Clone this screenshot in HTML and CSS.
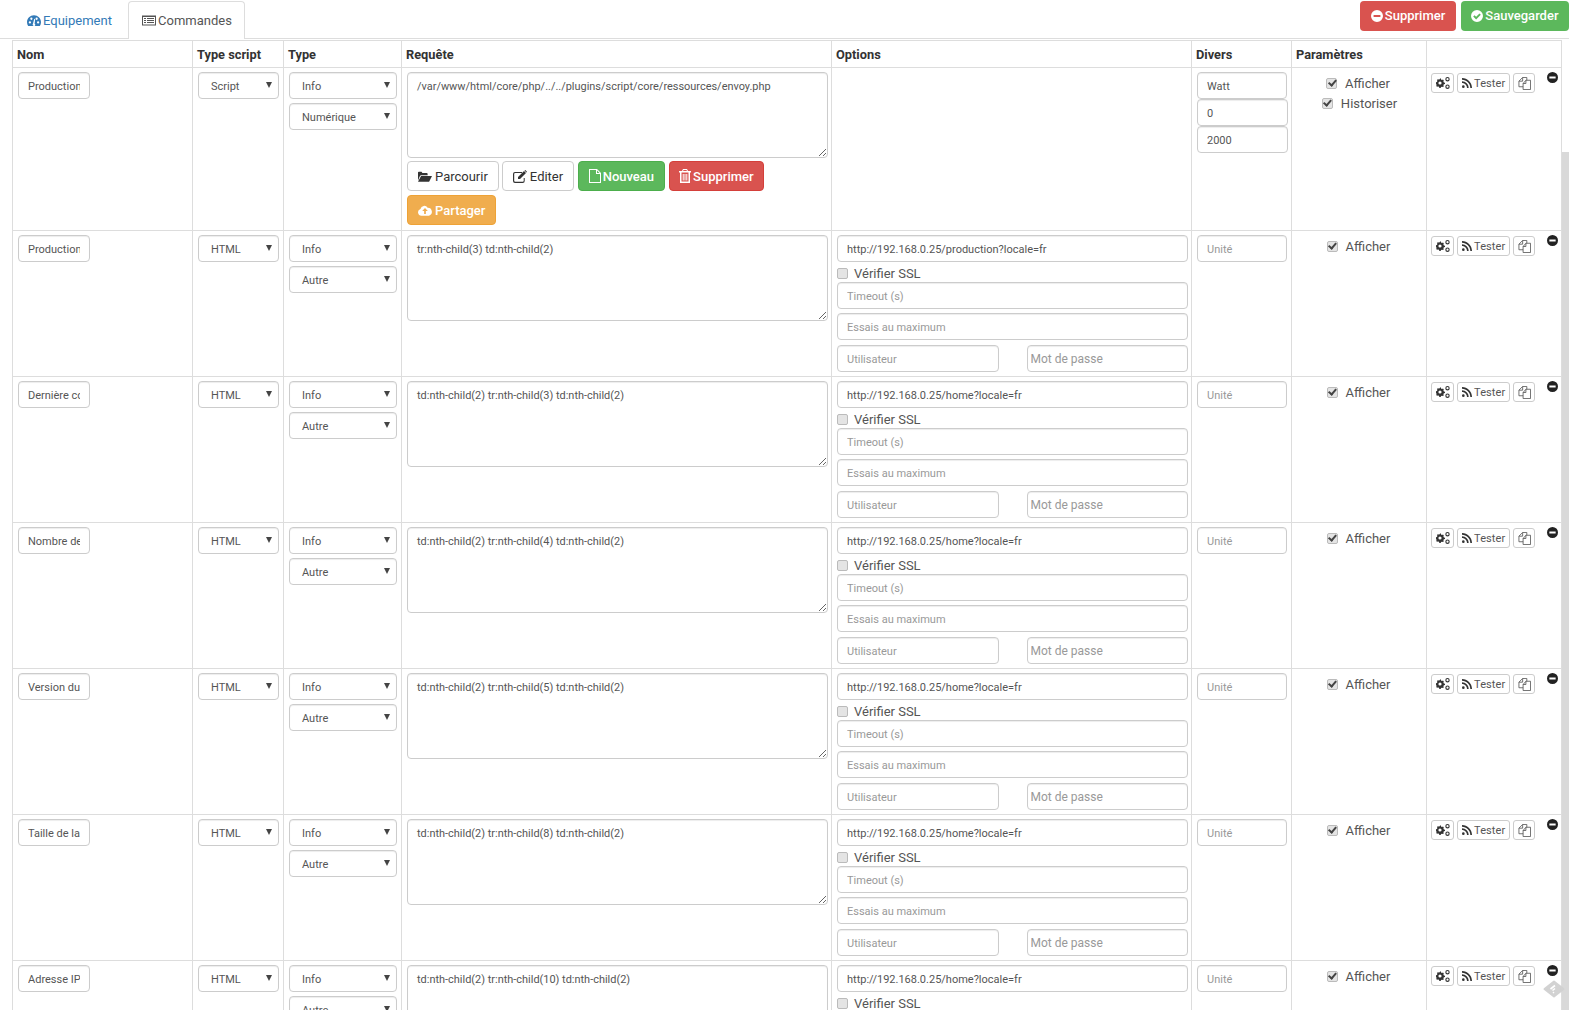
FILE: index.html
```html
<!DOCTYPE html>
<html lang="fr">

<head>
    <meta charset="UTF-8">
    <title>Commandes</title>
    <link rel="stylesheet" href="styles.css">
</head>

<body>

    <svg class="defs" width="0" height="0">
        <symbol id="i-dash" viewBox="0 0 16 14"><path d="M8 1C3.6 1 0 4.6 0 9c0 1.6.5 3 1.3 4.3h13.4C15.5 12 16 10.600 16 9c0-4.400-3.600-8-8-8zM3.300 10.500a1.300 1.300 0 1 1 0-2.600 1.300 1.300 0 0 1 0 2.600zM5 6.300a1.300 1.300 0 1 1 0-2.600 1.300 1.300 0 0 1 0 2.600zm4.200 4.600a1.500 1.500 0 1 1-2.400-.1L8.300 5l1 .2-.6 5.700zM12.700 10.500a1.300 1.300 0 1 1 0-2.600 1.300 1.300 0 0 1 0 2.600zM11 6.300a1.300 1.300 0 1 1 0-2.600 1.300 1.300 0 0 1 0 2.600z" fill-rule="evenodd"/></symbol>
        <symbol id="i-list" viewBox="0 0 14 12"><path d="M0 1h14v10H0zM1 2.500V10h12V2.500zM2 3.500h2v1H2zm3 0h7v1H5zM2 5.500h2v1H2zm3 0h7v1H5zM2 7.500h2v1H2zm3 0h7v1H5z" fill-rule="evenodd"/></symbol>
        <symbol id="i-minus" viewBox="0 0 14 14"><path d="M7 0a7 7 0 1 0 0 14A7 7 0 0 0 7 0zM3 5.700h8v2.600H3z" fill-rule="evenodd"/></symbol>
        <symbol id="i-check" viewBox="0 0 14 14"><path d="M7 0a7 7 0 1 0 0 14A7 7 0 0 0 7 0zM6 11 2.600 7.600l1.500-1.500L6 8l3.900-3.900 1.500 1.500z" fill-rule="evenodd"/></symbol>
        <symbol id="i-folder" viewBox="0 0 16 13"><path d="M0 11V2q0-1 1-1h3l1 1.500h5q1 0 1 1V5H3.500Q2.700 5 2.300 5.700zM3.500 6H16l-3 6q-.3.600-1 .6H0z"/></symbol>
        <symbol id="i-edit" viewBox="0 0 14 13"><path d="M2 2h7v1H2.300Q1.200 3 1.200 4v6.700q0 1 1.100 1h7.400q1 0 1-1V8h1v3q0 2-2 2H2q-2 0-2-2V4q0-2 2-2zM5 7l6-6 2 2-6 6H5zM11.500.5l.8-.5 1.700 1.700-.6.800z"/></symbol>
        <symbol id="i-file" viewBox="0 0 12 14"><path d="M0 0h8l4 4v10H0zM1 1v12h10V5H7V1zm7 .5V4h2.500z" fill-rule="evenodd"/></symbol>
        <symbol id="i-trash" viewBox="0 0 12 14"><path d="M4 0h4l1 2h3v1.500h-1V14H1V3.500H0V2h3zM4.500 1l-.4 1h3.800l-.4-1zM2.500 3.500V12.500h7V3.500zM3.700 5h1v6.500h-1zM5.500 5h1v6.500h-1zM7.300 5h1v6.500h-1z" fill-rule="evenodd"/></symbol>
        <symbol id="i-cloud" viewBox="0 0 16 12"><path d="M4 12a4 4 0 0 1-1.200-7.800A4.500 4.500 0 0 1 11 2.800 4.700 4.700 0 0 1 12.500 12zM8 3 4.800 6.500H7V10h2V6.500h2.200z" fill-rule="evenodd"/></symbol>
        <symbol id="i-gears" viewBox="0 0 14 12"><path d="M5 2.500 6 3l1-.4.800.8-.4 1 .5 1 1.100.3v1.300l-1.100.3-.5 1 .4 1-.8.800-1-.4-1 .4L4.700 11H3.300L3 9.800l-1-.4-1 .4-.8-.8.4-1-.5-1L-.1 6.700V5.400L.9 5l.5-1-.4-1 .8-.8 1 .4 1-.4L4 1.500H5zM4 4.400a1.600 1.600 0 1 0 0 3.200 1.600 1.600 0 0 0 0-3.200zM11.500 0a2.200 2.200 0 1 1 0 4.400 2.200 2.200 0 0 1 0-4.400zm0 1.100a1.100 1.100 0 1 0 0 2.200 1.100 1.100 0 0 0 0-2.200zM11.500 7.500a2.200 2.200 0 1 1 0 4.400 2.200 2.200 0 0 1 0-4.400zm0 1.100a1.100 1.100 0 1 0 0 2.200 1.100 1.100 0 0 0 0-2.200z" fill-rule="evenodd"/></symbol>
        <symbol id="i-rss" viewBox="0 0 12 12"><path d="M0 0c6.600 0 12 5.400 12 12h-2C10 6.500 5.500 2 0 2zM0 4c4.400 0 8 3.600 8 8H6C6 8.700 3.300 6 0 6zM1.600 8.800a1.600 1.600 0 1 1 0 3.200 1.600 1.600 0 0 1 0-3.200z"/></symbol>
        <symbol id="i-copy" viewBox="0 0 14 14"><path d="M9.500 3.500V.5H5L1 4.500V10.500H5.500M5 .5V4.500H1M5.500 7 8.500 3.500H13.500V13.500H5.500zM8.500 3.500V7H5.500" fill="none" stroke="currentColor" stroke-width=".9"/></symbol>
    </svg>

    <div class="page">
        <div class="content">

            <div class="topbar">
                <ul class="tabs">
                    <li class="tab"><svg class="ico ico-blue"><use href="#i-dash"/></svg>Equipement</li>
                    <li class="tab tab-active"><svg class="ico"><use href="#i-list"/></svg>Commandes</li>
                </ul>
                <div class="top-actions">
                    <a class="btn btn-top btn-red"><svg class="ico ico-sm"><use href="#i-minus"/></svg>Supprimer</a>
                    <a class="btn btn-top btn-green"><svg class="ico ico-sm"><use href="#i-check"/></svg>Sauvegarder</a>
                </div>
            </div>

            <table class="cmds">
                <thead>
                    <tr>
                        <th class="c-name">Nom</th>
                        <th class="c-script">Type script</th>
                        <th class="c-type">Type</th>
                        <th class="c-req">Requête</th>
                        <th class="c-opts">Options</th>
                        <th class="c-misc">Divers</th>
                        <th class="c-params">Paramètres</th>
                        <th class="c-act"></th>
                    </tr>
                </thead>
                <tbody>
                    <tr class="row-first">
                        <td><input class="field f-name" type="text" value="Production totale"></td>
                        <td><span class="select">Script</span></td>
                        <td><span class="select">Info</span><span class="select">Numérique</span></td>
                        <td class="wide">
                            <textarea class="field f-req">/var/www/html/core/php/../../plugins/script/core/ressources/envoy.php</textarea>
                            <div class="req-btns">
                                <a class="btn"><svg class="ico ico-dark"><use href="#i-folder"/></svg>Parcourir</a>
                                <a class="btn"><svg class="ico ico-dark"><use href="#i-edit"/></svg>Editer</a>
                                <a class="btn btn-green"><svg class="ico ico-sm"><use href="#i-file"/></svg>Nouveau</a>
                                <a class="btn btn-red"><svg class="ico ico-sm"><use href="#i-trash"/></svg>Supprimer</a>
                                <a class="btn btn-orange"><svg class="ico"><use href="#i-cloud"/></svg>Partager</a>
                            </div>
                        </td>
                        <td class="wide"></td>
                        <td class="misc">
                            <input class="field" type="text" value="Watt">
                            <input class="field f-tight" type="text" value="0">
                            <input class="field f-tight" type="text" value="2000">
                        </td>
                        <td class="params">
                            <label class="check"><input type="checkbox" checked>Afficher</label>
                            <label class="check"><input type="checkbox" checked>Historiser</label>
                        </td>
                        <td>
                            <div class="acts">
                                <a class="btn-xs"><svg class="ico ico-dark"><use href="#i-gears"/></svg></a>
                                <a class="btn-xs"><svg class="ico ico-dark"><use href="#i-rss"/></svg>Tester</a>
                                <a class="btn-xs"><svg class="ico ico-dark"><use href="#i-copy"/></svg></a>
                                <svg class="remove"><use href="#i-minus"/></svg>
                            </div>
                        </td>
                    </tr>
                    <tr>
                        <td><input class="field f-name" type="text" value="Production instantanée"></td>
                        <td><span class="select">HTML</span></td>
                        <td><span class="select">Info</span><span class="select">Autre</span></td>
                        <td class="wide"><textarea class="field f-req">tr:nth-child(3) td:nth-child(2)</textarea></td>
                        <td class="wide">
                            <input class="field" type="text" value="http://192.168.0.25/production?locale=fr">
                            <label class="check check-ssl"><input type="checkbox">Vérifier SSL</label>
                            <input class="field" type="text" placeholder="Timeout (s)">
                            <input class="field f-gap" type="text" placeholder="Essais au maximum">
                            <div class="creds"><input class="field" type="text" placeholder="Utilisateur"><input class="field f-pass" type="text" placeholder="Mot de passe"></div>
                        </td>
                        <td class="misc"><input class="field" type="text" placeholder="Unité"></td>
                        <td class="params"><label class="check"><input type="checkbox" checked>Afficher</label></td>
                        <td>
                            <div class="acts">
                                <a class="btn-xs"><svg class="ico ico-dark"><use href="#i-gears"/></svg></a>
                                <a class="btn-xs"><svg class="ico ico-dark"><use href="#i-rss"/></svg>Tester</a>
                                <a class="btn-xs"><svg class="ico ico-dark"><use href="#i-copy"/></svg></a>
                                <svg class="remove"><use href="#i-minus"/></svg>
                            </div>
                        </td>
                    </tr>
                    <tr>
                        <td><input class="field f-name" type="text" value="Dernière communication"></td>
                        <td><span class="select">HTML</span></td>
                        <td><span class="select">Info</span><span class="select">Autre</span></td>
                        <td class="wide"><textarea class="field f-req">td:nth-child(2) tr:nth-child(3) td:nth-child(2)</textarea></td>
                        <td class="wide">
                            <input class="field" type="text" value="http://192.168.0.25/home?locale=fr">
                            <label class="check check-ssl"><input type="checkbox">Vérifier SSL</label>
                            <input class="field" type="text" placeholder="Timeout (s)">
                            <input class="field f-gap" type="text" placeholder="Essais au maximum">
                            <div class="creds"><input class="field" type="text" placeholder="Utilisateur"><input class="field f-pass" type="text" placeholder="Mot de passe"></div>
                        </td>
                        <td class="misc"><input class="field" type="text" placeholder="Unité"></td>
                        <td class="params"><label class="check"><input type="checkbox" checked>Afficher</label></td>
                        <td>
                            <div class="acts">
                                <a class="btn-xs"><svg class="ico ico-dark"><use href="#i-gears"/></svg></a>
                                <a class="btn-xs"><svg class="ico ico-dark"><use href="#i-rss"/></svg>Tester</a>
                                <a class="btn-xs"><svg class="ico ico-dark"><use href="#i-copy"/></svg></a>
                                <svg class="remove"><use href="#i-minus"/></svg>
                            </div>
                        </td>
                    </tr>
                    <tr>
                        <td><input class="field f-name" type="text" value="Nombre de panneaux"></td>
                        <td><span class="select">HTML</span></td>
                        <td><span class="select">Info</span><span class="select">Autre</span></td>
                        <td class="wide"><textarea class="field f-req">td:nth-child(2) tr:nth-child(4) td:nth-child(2)</textarea></td>
                        <td class="wide">
                            <input class="field" type="text" value="http://192.168.0.25/home?locale=fr">
                            <label class="check check-ssl"><input type="checkbox">Vérifier SSL</label>
                            <input class="field" type="text" placeholder="Timeout (s)">
                            <input class="field f-gap" type="text" placeholder="Essais au maximum">
                            <div class="creds"><input class="field" type="text" placeholder="Utilisateur"><input class="field f-pass" type="text" placeholder="Mot de passe"></div>
                        </td>
                        <td class="misc"><input class="field" type="text" placeholder="Unité"></td>
                        <td class="params"><label class="check"><input type="checkbox" checked>Afficher</label></td>
                        <td>
                            <div class="acts">
                                <a class="btn-xs"><svg class="ico ico-dark"><use href="#i-gears"/></svg></a>
                                <a class="btn-xs"><svg class="ico ico-dark"><use href="#i-rss"/></svg>Tester</a>
                                <a class="btn-xs"><svg class="ico ico-dark"><use href="#i-copy"/></svg></a>
                                <svg class="remove"><use href="#i-minus"/></svg>
                            </div>
                        </td>
                    </tr>
                    <tr>
                        <td><input class="field f-name" type="text" value="Version du logiciel"></td>
                        <td><span class="select">HTML</span></td>
                        <td><span class="select">Info</span><span class="select">Autre</span></td>
                        <td class="wide"><textarea class="field f-req">td:nth-child(2) tr:nth-child(5) td:nth-child(2)</textarea></td>
                        <td class="wide">
                            <input class="field" type="text" value="http://192.168.0.25/home?locale=fr">
                            <label class="check check-ssl"><input type="checkbox">Vérifier SSL</label>
                            <input class="field" type="text" placeholder="Timeout (s)">
                            <input class="field f-gap" type="text" placeholder="Essais au maximum">
                            <div class="creds"><input class="field" type="text" placeholder="Utilisateur"><input class="field f-pass" type="text" placeholder="Mot de passe"></div>
                        </td>
                        <td class="misc"><input class="field" type="text" placeholder="Unité"></td>
                        <td class="params"><label class="check"><input type="checkbox" checked>Afficher</label></td>
                        <td>
                            <div class="acts">
                                <a class="btn-xs"><svg class="ico ico-dark"><use href="#i-gears"/></svg></a>
                                <a class="btn-xs"><svg class="ico ico-dark"><use href="#i-rss"/></svg>Tester</a>
                                <a class="btn-xs"><svg class="ico ico-dark"><use href="#i-copy"/></svg></a>
                                <svg class="remove"><use href="#i-minus"/></svg>
                            </div>
                        </td>
                    </tr>
                    <tr>
                        <td><input class="field f-name" type="text" value="Taille de la base"></td>
                        <td><span class="select">HTML</span></td>
                        <td><span class="select">Info</span><span class="select">Autre</span></td>
                        <td class="wide"><textarea class="field f-req">td:nth-child(2) tr:nth-child(8) td:nth-child(2)</textarea></td>
                        <td class="wide">
                            <input class="field" type="text" value="http://192.168.0.25/home?locale=fr">
                            <label class="check check-ssl"><input type="checkbox">Vérifier SSL</label>
                            <input class="field" type="text" placeholder="Timeout (s)">
                            <input class="field f-gap" type="text" placeholder="Essais au maximum">
                            <div class="creds"><input class="field" type="text" placeholder="Utilisateur"><input class="field f-pass" type="text" placeholder="Mot de passe"></div>
                        </td>
                        <td class="misc"><input class="field" type="text" placeholder="Unité"></td>
                        <td class="params"><label class="check"><input type="checkbox" checked>Afficher</label></td>
                        <td>
                            <div class="acts">
                                <a class="btn-xs"><svg class="ico ico-dark"><use href="#i-gears"/></svg></a>
                                <a class="btn-xs"><svg class="ico ico-dark"><use href="#i-rss"/></svg>Tester</a>
                                <a class="btn-xs"><svg class="ico ico-dark"><use href="#i-copy"/></svg></a>
                                <svg class="remove"><use href="#i-minus"/></svg>
                            </div>
                        </td>
                    </tr>
                    <tr>
                        <td><input class="field f-name" type="text" value="Adresse IP"></td>
                        <td><span class="select">HTML</span></td>
                        <td><span class="select">Info</span><span class="select">Autre</span></td>
                        <td class="wide"><textarea class="field f-req">td:nth-child(2) tr:nth-child(10) td:nth-child(2)</textarea></td>
                        <td class="wide">
                            <input class="field" type="text" value="http://192.168.0.25/home?locale=fr">
                            <label class="check check-ssl"><input type="checkbox">Vérifier SSL</label>
                            <input class="field" type="text" placeholder="Timeout (s)">
                            <input class="field f-gap" type="text" placeholder="Essais au maximum">
                            <div class="creds"><input class="field" type="text" placeholder="Utilisateur"><input class="field f-pass" type="text" placeholder="Mot de passe"></div>
                        </td>
                        <td class="misc"><input class="field" type="text" placeholder="Unité"></td>
                        <td class="params"><label class="check"><input type="checkbox" checked>Afficher</label></td>
                        <td>
                            <div class="acts">
                                <a class="btn-xs"><svg class="ico ico-dark"><use href="#i-gears"/></svg></a>
                                <a class="btn-xs"><svg class="ico ico-dark"><use href="#i-rss"/></svg>Tester</a>
                                <a class="btn-xs"><svg class="ico ico-dark"><use href="#i-copy"/></svg></a>
                                <svg class="remove"><use href="#i-minus"/></svg>
                            </div>
                        </td>
                    </tr>
                </tbody>
            </table>
        </div>

        <div class="scrollbar"><div class="thumb"></div></div>

        <svg class="bug-badge" viewBox="0 0 22 18">
            <path d="M11 1.500 20.500 9 11 16.500 1.500 9z" fill="#d2d2d2" stroke="#d2d2d2" stroke-width="2" stroke-linejoin="round"/>
            <path d="M7.500 9 12 5.500M9.500 10.500 12 8.500M10 13l1-.8" stroke="#fff" stroke-width="1.600"/>
        </svg>
    </div>

</body>

</html>
```

FILE: styles.css
```css
body {
    background-color: white;
    color: #555;
    font-family: Roboto, Arial, sans-serif;
    font-size: 11px;
    margin: 0;
}

.defs {
    display: block;
    height: 0;
}

.page {
    display: flex;
    height: 1010px;
    overflow: hidden;
    position: relative;
    width: 1569px;
}

.content {
    box-sizing: border-box;
    flex: 0 0 1562px;
    padding-left: 12px;
}

/* ====== TOP BAR ====== */

.topbar {
    align-items: flex-start;
    border-bottom: 1px solid #ddd;
    display: flex;
    height: 37px;
    justify-content: space-between;
    margin-left: -12px;
    margin-right: -7px;
    padding-left: 12px;
    padding-top: 1px;
}

.tabs {
    display: flex;
    list-style: none;
    margin: 0;
    padding: 0;
}

.tab {
    align-items: center;
    box-sizing: border-box;
    color: #337ab7;
    display: flex;
    font-size: 13px;
    height: 38px;
    padding: 0 15px;
    width: 116px;
}

.tab-active {
    background-color: white;
    border: 1px solid #ddd;
    border-bottom: 0;
    border-radius: 4px 4px 0 0;
    color: #555;
    padding: 0 13px;
    width: 117px;
}

.top-actions {
    display: flex;
    gap: 5px;
}

.ico {
    fill: currentColor;
    flex: none;
    height: 13px;
    margin-right: 2px;
    width: 14px;
}

.ico-sm {
    height: 14px;
    width: 12px;
}

.ico-blue {
    color: #337ab7;
}

.ico-dark {
    color: #333;
}

/* ====== BUTTONS ====== */

.btn {
    align-items: center;
    background-color: white;
    border: 1px solid #ccc;
    border-radius: 4px;
    box-sizing: border-box;
    color: #333;
    display: inline-flex;
    font-size: 13px;
    height: 30px;
    padding: 0 10.500px;
}

.btn-top {
    border: 0;
    font-weight: 500;
    padding: 0 10.500px 1px;
}

.btn-red {
    background-color: #d9534f;
    border-color: #d43f3a;
    color: white;
    font-weight: 500;
}

.btn-green {
    background-color: #5cb85c;
    border-color: #4cae4c;
    color: white;
    font-weight: 500;
}

.btn-orange {
    background-color: #f0ad4e;
    border-color: #eea236;
    color: white;
    font-weight: 500;
}

.req-btns .btn {
    padding: 0 10px;
}

.req-btns .ico {
    margin-right: 3px;
}

.req-btns .btn-green,
.req-btns .btn-red {
    margin-left: 1px;
    padding: 0 9.500px;
}

.req-btns .ico-sm {
    margin-right: 2px;
}

.btn-xs {
    align-items: center;
    border: 1px solid #ccc;
    border-radius: 3px;
    box-sizing: border-box;
    color: #555;
    display: inline-flex;
    flex: none;
    font-size: 11px;
    height: 20px;
    justify-content: center;
    letter-spacing: .1px;
    padding: 0 4px;
}

/* ====== TABLE ====== */

.cmds {
    border-collapse: collapse;
    margin-top: 1px;
    table-layout: fixed;
    width: 1550px;
}

.cmds th,
.cmds td {
    border: 1px solid #ddd;
    box-sizing: border-box;
    padding: 4px 4px 4px 5px;
    text-align: left;
    vertical-align: top;
}

.cmds th {
    color: #333;
    font-size: 12.800px;
    font-weight: 700;
    height: 27px;
    padding: 0 4px;
    vertical-align: middle;
}

.cmds td.wide {
    padding-right: 3px;
}

.cmds tbody tr {
    height: 146px;
}

.cmds tbody tr.row-first {
    height: 163px;
}

.c-name { width: 180px; }
.c-script { width: 91px; }
.c-type { width: 118px; }
.c-req { width: 430px; }
.c-opts { width: 360px; }
.c-misc { width: 100px; }
.c-params { width: 135px; }
.c-act { width: 135px; }

/* ====== FORM FIELDS ====== */

.field {
    border: 1px solid #ccc;
    border-radius: 4px;
    box-shadow: inset 0 1px 1px rgba(0, 0, 0, .075);
    box-sizing: border-box;
    color: #555;
    display: block;
    font-family: Roboto, Arial, sans-serif;
    font-size: 11px;
    height: 27px;
    padding: 2px 9px 0;
    width: 100%;
}

.field::placeholder {
    color: #999;
}

.f-name {
    width: 72px;
}

.f-req {
    font-size: 10.950px;
    height: 86px;
    padding-top: 7px;
    resize: vertical;
}

.f-gap {
    margin-top: 4px;
}

.f-tight {
    width: 91px;
}

.f-pass {
    font-size: 12px;
    padding: 0 3px;
}

.select {
    align-items: center;
    border: 1px solid #ccc;
    border-radius: 4px;
    box-shadow: inset 0 1px 1px rgba(0, 0, 0, .075);
    box-sizing: border-box;
    display: flex;
    height: 27px;
    margin-bottom: 4px;
    padding: 2px 0 0 12px;
    position: relative;
}

.select::after {
    border-left: 3.500px solid transparent;
    border-right: 3.500px solid transparent;
    border-top: 6px solid #444;
    content: "";
    position: absolute;
    right: 6px;
    top: 9px;
}

.req-btns {
    display: flex;
    flex-wrap: wrap;
    gap: 4px 3px;
    margin-top: 3px;
}

.creds {
    display: grid;
    gap: 28px;
    grid-template-columns: 1fr 1fr;
    margin-top: 5px;
}

/* ====== CHECKBOXES ====== */

.check {
    align-items: center;
    color: #555;
    display: flex;
    font-size: 13px;
    height: 20px;
    justify-content: center;
}

.check input {
    appearance: none;
    background-color: #e4e4e4;
    border: 1px solid #bbb;
    border-radius: 2px;
    box-sizing: border-box;
    height: 11px;
    margin: 0 8px 0 0;
    position: relative;
    width: 11px;
}

.check input:checked::after {
    border-bottom: 2px solid #444;
    border-right: 2px solid #444;
    box-sizing: border-box;
    content: "";
    height: 8px;
    left: 2.500px;
    position: absolute;
    top: -.5px;
    transform: rotate(40deg);
    width: 4.500px;
}

.check-ssl {
    height: 18px;
    justify-content: flex-start;
    padding-top: 2px;
}

.check-ssl input {
    margin-right: 6px;
}

.cmds td.params {
    padding-right: 6px;
    padding-top: 5px;
}

.row-first .check {
    padding-left: 2px;
}

.row-first .check:first-child {
    padding-right: 3px;
}

/* ====== ROW ACTIONS ====== */

.acts {
    align-items: flex-start;
    display: flex;
    gap: 3px;
    margin-left: -1px;
    padding-top: 1px;
}

.acts .ico {
    height: 10px;
    margin-right: 2px;
    width: 10px;
}

.acts .btn-xs:first-child {
    width: 23px;
}

.acts .btn-xs:first-child .ico {
    height: 12px;
    margin-right: 0;
    width: 14px;
}

.acts .btn-xs:nth-child(3) {
    width: 22px;
}

.acts .btn-xs:nth-child(3) .ico {
    color: #555;
    height: 13px;
    margin-right: 0;
    width: 13px;
}

.remove {
    fill: #222;
    flex: none;
    height: 11px;
    margin-left: 9px;
    margin-top: -1px;
    width: 11px;
}

/* ====== SCROLLBAR ====== */

.scrollbar {
    flex: 0 0 7px;
    padding-top: 152px;
}

.thumb {
    background-color: #d9d9d9;
    height: 100%;
}

.bug-badge {
    bottom: 12px;
    height: 18px;
    position: absolute;
    right: 4px;
    width: 22px;
}
```
